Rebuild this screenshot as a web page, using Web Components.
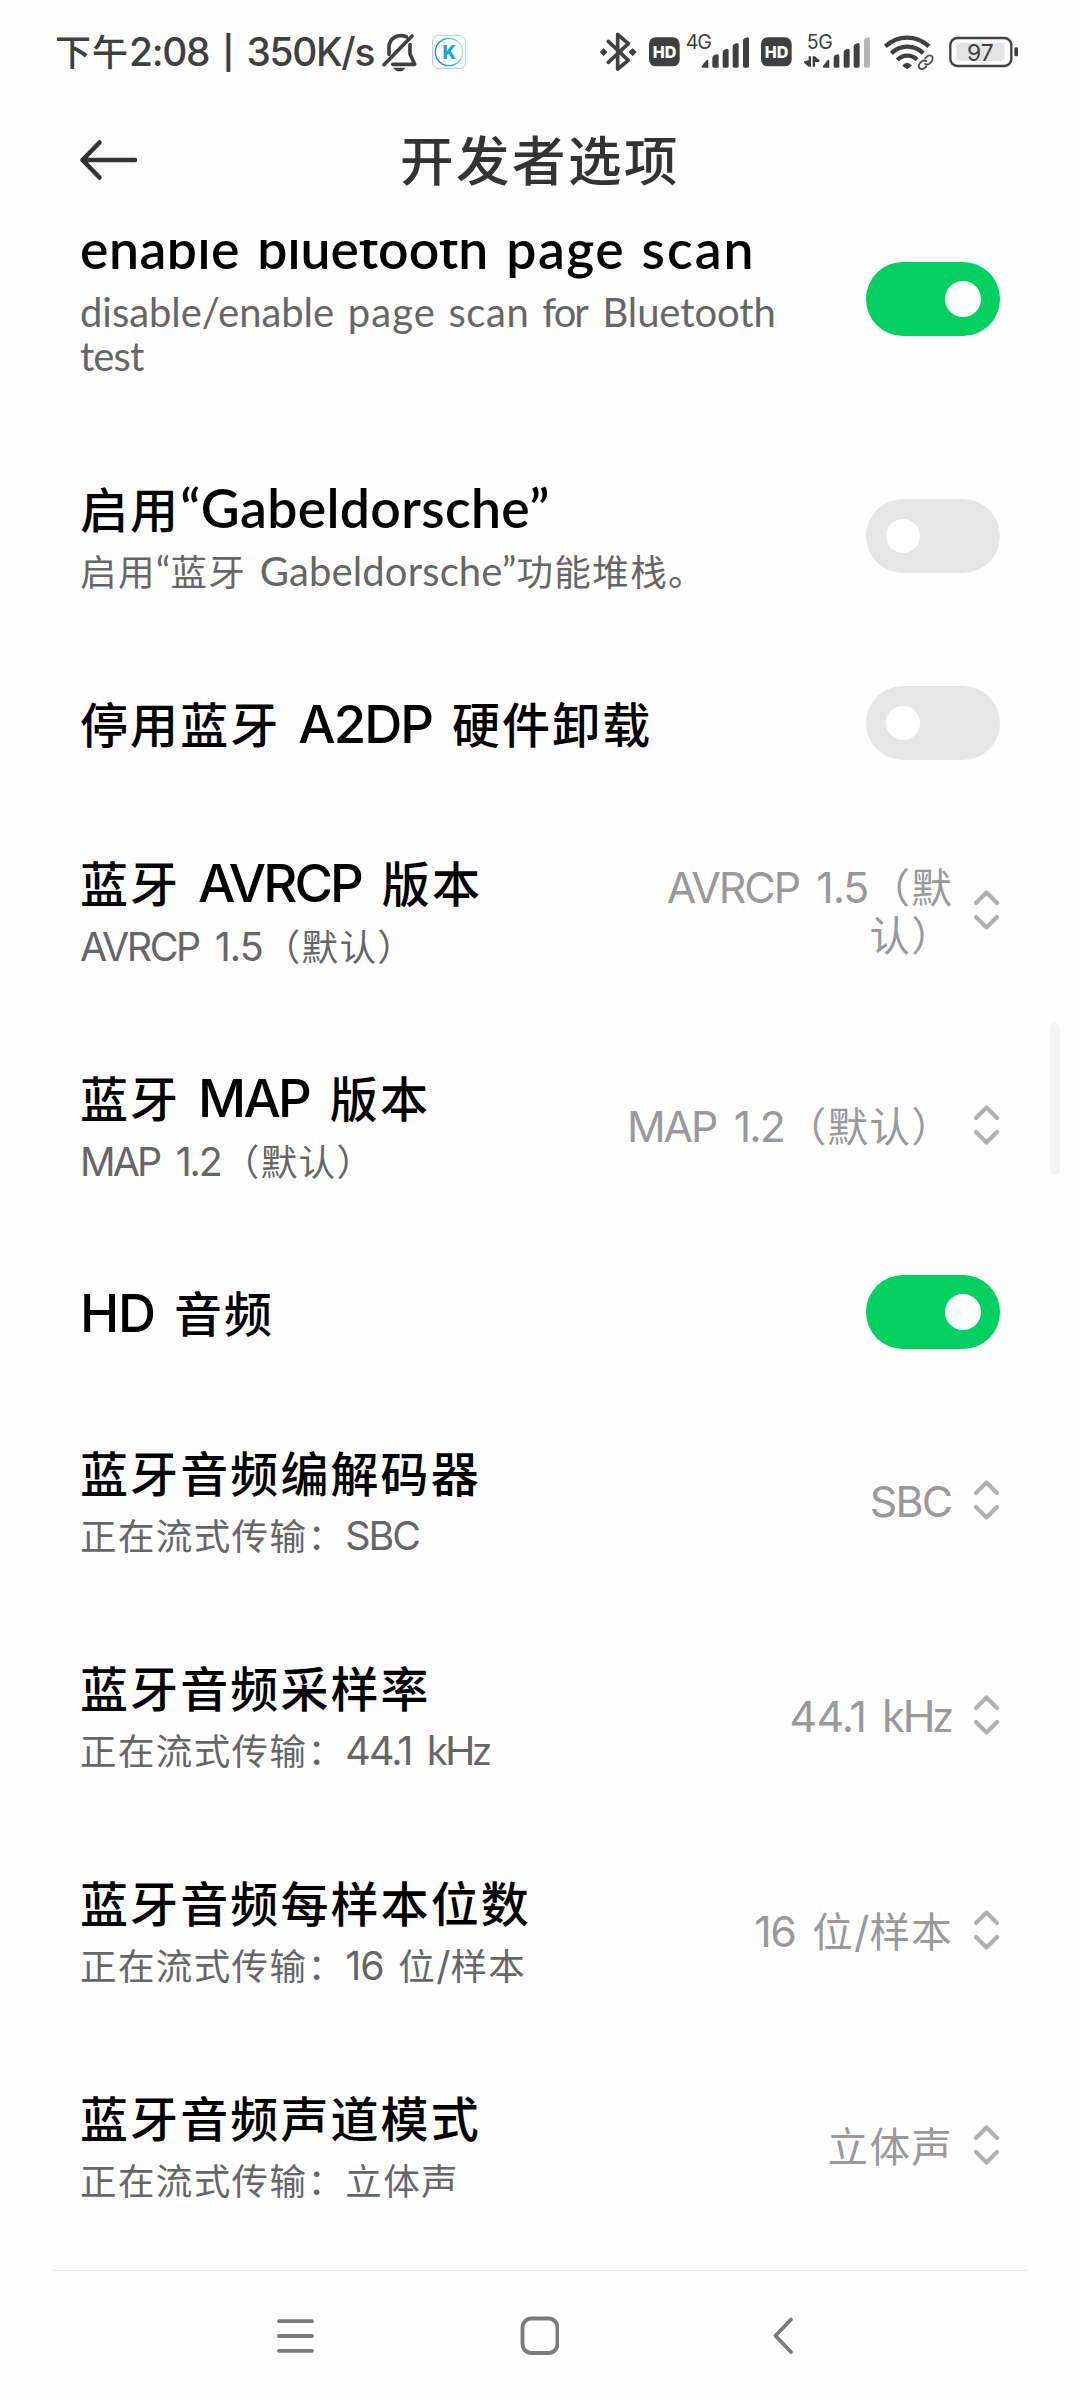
<!DOCTYPE html>
<html lang="zh-CN">
<head>
<meta charset="utf-8">
<title>开发者选项</title>
<style>
  html, body { margin: 0; padding: 0; background: #fefefe; }
  body { font-family: "Noto Sans CJK SC", sans-serif; text-spacing-trim: space-all; text-autospace: no-autospace; }
</style>
</head>
<body>
<settings-screen>
  <status-bar slot="status"></status-bar>
  <title-bar slot="header">开发者选项</title-bar>
  <setting-row control="on">
    <span slot="title"><latin-run w="157">enable</latin-run> <latin-run w="225">bluetooth</latin-run> <latin-run w="113">page</latin-run> <latin-run w="108">scan</latin-run></span>
    <span slot="summary"><latin-run w="252">disable/enable</latin-run> <latin-run w="84">page</latin-run> <latin-run w="77">scan</latin-run> <latin-run w="47">for</latin-run> <latin-run w="168">Bluetooth</latin-run><br><latin-run w="64">test</latin-run></span>
  </setting-row>
  <setting-row control="off">
    <span slot="title">启用<latin-run w="366">“Gabeldorsche”</latin-run></span>
    <span slot="summary">启用<latin-run w="10">“</latin-run>蓝牙 <latin-run w="254">Gabeldorsche”</latin-run>功能堆栈。</span>
  </setting-row>
  <setting-row control="off">
    <span slot="title">停用蓝牙 <latin-run w="133">A2DP</latin-run> 硬件卸载</span>
  </setting-row>
  <setting-row control="select">
    <span slot="title">蓝牙 <latin-run w="163">AVRCP</latin-run> 版本</span>
    <span slot="summary"><latin-run w="119">AVRCP</latin-run> <latin-run w="46">1.5</latin-run>（默认）</span>
    <span slot="value"><latin-run w="132">AVRCP</latin-run> <latin-run w="49">1.5</latin-run>（默<br>认）</span>
  </setting-row>
  <setting-row control="select">
    <span slot="title">蓝牙 <latin-run w="108">MAP</latin-run> 版本</span>
    <span slot="summary"><latin-run w="78">MAP</latin-run> <latin-run w="44">1.2</latin-run>（默认）</span>
    <span slot="value"><latin-run w="87">MAP</latin-run> <latin-run w="48">1.2</latin-run>（默认）</span>
  </setting-row>
  <setting-row control="on">
    <span slot="title"><latin-run w="70">HD</latin-run> 音频</span>
  </setting-row>
  <setting-row control="select">
    <span slot="title">蓝牙音频编解码器</span>
    <span slot="summary">正在流式传输：<latin-run w="72">SBC</latin-run></span>
    <span slot="value"><latin-run w="79">SBC</latin-run></span>
  </setting-row>
  <setting-row control="select">
    <span slot="title">蓝牙音频采样率</span>
    <span slot="summary">正在流式传输：<latin-run w="63">44.1</latin-run> <latin-run w="61">kHz</latin-run></span>
    <span slot="value"><latin-run w="72">44.1</latin-run> <latin-run w="67">kHz</latin-run></span>
  </setting-row>
  <setting-row control="select">
    <span slot="title">蓝牙音频每样本位数</span>
    <span slot="summary">正在流式传输：<latin-run w="37">16</latin-run> 位<latin-run w="12">/</latin-run>样本</span>
    <span slot="value"><latin-run w="39">16</latin-run> 位<latin-run w="13">/</latin-run>样本</span>
  </setting-row>
  <setting-row control="select">
    <span slot="title">蓝牙音频声道模式</span>
    <span slot="summary">正在流式传输：立体声</span>
    <span slot="value">立体声</span>
  </setting-row>
  <nav-bar slot="nav"></nav-bar>
</settings-screen>

<script>
function define(name, html, extra) {
  const tpl = document.createElement('template');
  tpl.innerHTML = html.trim();
  customElements.define(name, class extends HTMLElement {
    constructor() {
      super();
      this.attachShadow({ mode: 'open' }).appendChild(tpl.content.cloneNode(true));
    }
    connectedCallback() { if (extra) extra(this, this.shadowRoot); }
  });
}

define('settings-screen', `
<style>
  :host { display: flex; flex-direction: column; position: relative; width: 1080px; height: 2400px; overflow: hidden; background: #fefefe; }
  .list { height: 2030px; overflow: hidden; }
  .rows { display: flex; flex-direction: column; margin-top: -71px; }
  .thumb { position: absolute; left: 1050px; top: 1023px; width: 10px; height: 152px; border-radius: 5px; background: #f3f3f3; }
</style>
<slot name="status"></slot>
<slot name="header"></slot>
<div class="list"><div class="rows"><slot></slot></div></div>
<slot name="nav"></slot>
<div class="thumb"></div>`);

define('title-bar', `
<style>
  :host { display: grid; grid-template-columns: 200px 1fr 200px; align-items: center; height: 120px; padding-bottom: 20px; color: #333; }
  svg { display: block; margin-left: 76px; }
  h1 { margin: -4px 0 0; text-align: center; font-size: 53.5px; font-weight: 500; letter-spacing: 2.5px; line-height: 80px; }
</style>
<svg width="66" height="48" viewBox="0 0 66 48" fill="none" stroke="#333" stroke-width="4.6" stroke-linecap="round" stroke-linejoin="round"><path d="M59 24H6.500M23.500 6.500L6.500 24L23.500 41.500"/></svg>
<h1><slot></slot></h1>`);

define('setting-row', `
<style>
  :host { display: flex; align-items: center; justify-content: space-between; padding: 0 80px; }
  .text { padding: 48.5px 0 51px; }
  .title { font-size: 48px; line-height: 60px; font-weight: 500; letter-spacing: 2.1px; color: #000; --latin-size: 53.5px; word-spacing: 5px; white-space: nowrap; }
  .summary { margin: 12.5px 0 -1px; font-size: 36.5px; line-height: 44px; letter-spacing: 1.4px; color: #666; --latin-size: 40px; word-spacing: 4px; white-space: nowrap; }
  .value { font-size: 40.5px; line-height: 48px; letter-spacing: 1.3px; color: #999; --latin-size: 43.5px; word-spacing: 5px; text-align: right; white-space: nowrap; }
  .side { display: flex; align-items: center; gap: 20px; }
  [hidden] { display: none; }
</style>
<div class="text">
  <div class="title"><slot name="title"></slot></div>
  <div class="summary"><slot name="summary"></slot></div>
</div>
<div class="side">
  <div class="value"><slot name="value"></slot></div>
  <svg class="chev" width="27" height="42" viewBox="0 0 27 42" fill="none" stroke="#b1b1b1" stroke-width="4.2" stroke-linecap="round" stroke-linejoin="round"><path d="M3 14L13.500 3.500L24 14M3 28L13.500 38.500L24 28"/></svg>
  <toggle-switch></toggle-switch>
</div>`, (el, root) => {
  const kind = el.getAttribute('control');
  if (!el.querySelector('[slot=summary]')) root.querySelector('.summary').hidden = true;
  if (kind === 'select') {
    root.querySelector('toggle-switch').remove();
  } else {
    root.querySelector('.value').remove();
    root.querySelector('.chev').remove();
    root.querySelector('toggle-switch').setAttribute('state', kind);
  }
});

define('toggle-switch', `
<style>
  :host { display: flex; align-items: center; box-sizing: border-box; width: 134px; height: 74px; border-radius: 37px; background: #e6e6e6; padding: 0 20px; }
  :host([state="on"]) { background: #02d060; justify-content: flex-end; padding: 0 19px; }
  i { width: 34px; height: 34px; border-radius: 50%; background: #fff; }
  :host([state="on"]) i { width: 36px; height: 36px; }
</style><i></i>`);

define('nav-bar', `
<style>
  :host { display: block; height: 130px; }
  hr { border: 0; height: 1px; margin: 0 52px; background: #e4e4e4; }
  div { display: flex; justify-content: space-between; align-items: center; padding: 0 280px 0 275px; height: 129px; }
  svg { display: block; fill: none; stroke: #7a7a7a; stroke-width: 3.8; stroke-linecap: round; stroke-linejoin: round; }
</style>
<hr>
<div>
  <svg width="42" height="42" viewBox="0 0 42 42"><path d="M4 6.200H37M4 21H37M4 35.800H37"/></svg>
  <svg width="42" height="42" viewBox="0 0 42 42"><rect x="5.500" y="3.500" width="35" height="34.500" rx="9"/></svg>
  <svg width="42" height="42" viewBox="0 0 42 42"><path d="M33 4.500L17.500 20.700L33 37"/></svg>
</div>`);

define('status-bar', `
<style>
  :host { display: flex; justify-content: space-between; height: 100px; color: #404040; }
  .left { display: flex; padding-left: 55px; }
  .clock { font-size: 36px; line-height: 100px; font-weight: 500; letter-spacing: 1px; --latin-size: 39.5px; word-spacing: 3px; white-space: nowrap; width: 321px; }
  .bar { --latin-size: 33px; font-weight: 600; position: relative; top: -2px; }
  .right { display: flex; padding-right: 53px; }
  svg { display: block; margin-top: 10px; fill: #404040; }
  text { font-family: Inter, sans-serif; }
</style>
<div class="left">
  <div class="clock">下午<latin-run w="78">2:08</latin-run> <latin-run class="bar" w="4">|</latin-run> <latin-run w="126">350K/s</latin-run></div>
  <svg width="48" height="90" viewBox="1008 0 144 270"><g fill="none" stroke="#404040" stroke-width="11" stroke-linecap="round" stroke-linejoin="round"><path d="M1047 133V112C1047 84 1074 71 1099 80M1110 104V132L1124 163H1058M1116 78L1032 164"/></g><path d="M1060 173H1096Q1090 184 1078 184Q1066 184 1060 173Z"/></svg>
  <svg width="46" height="90" viewBox="1152 0 138 270"><defs><linearGradient id="k" x1="0" y1=".6" x2="1" y2=".4"><stop offset="0" stop-color="#2380d8"/><stop offset=".5" stop-color="#22b0ea"/><stop offset="1" stop-color="#a7ecd2"/></linearGradient></defs><path d="M1190 77H1265L1277 89V164L1265 175H1190L1178 164V89Z" fill="#fdfeff" stroke="#b3c9d4" stroke-width="3"/><circle cx="1227" cy="126" r="41" fill="none" stroke="url(#k)" stroke-width="4"/><text x="1228" y="146" font-size="55" font-weight="800" text-anchor="middle" fill="#179ff0">K</text></svg>
</div>
<div class="right">
  <svg width="45" height="90" viewBox="50 0 135 270"><path d="M84 94L144 151L112 177V73L144 101L84 157" fill="none" stroke="#404040" stroke-width="11" stroke-linejoin="round" stroke-linecap="round"/><path d="M70 116L80 126L70 137L60 126ZM157 116L168 126L157 137L146 126Z" stroke="#404040" stroke-width="3" stroke-linejoin="round"/></svg>
  <svg width="42" height="90" viewBox="185 0 126 270"><rect x="206" y="82" width="92" height="87" rx="20"/><text x="217" y="144" font-size="49" font-weight="800" fill="#fff" textLength="71" lengthAdjust="spacingAndGlyphs">HD</text></svg>
  <svg width="70" height="90" viewBox="311 0 210 270"><text x="316" y="116" font-size="59" textLength="79">4G</text><path d="M364 168L379 150Q384 148 384 153V173H368Q363 173 364 168ZM396 143Q396 138 402 135L410 133Q415 133 415 138V170Q415 173 411 173H400Q396 173 396 169ZM427 126Q427 121 432 119L440 116Q445 116 445 121V169Q445 173 441 173H431Q427 173 427 169ZM457 109Q457 104 462 102L470 99Q475 99 475 104V169Q475 173 471 173H461Q457 173 457 169ZM488 92Q488 87 493 85L501 82Q506 82 506 87V169Q506 173 502 173H492Q488 173 488 169Z"/></svg>
  <svg width="43" height="90" viewBox="521 0 129 270"><rect x="542" y="82" width="92" height="87" rx="20"/><text x="553" y="144" font-size="49" font-weight="800" fill="#fff" textLength="71" lengthAdjust="spacingAndGlyphs">HD</text></svg>
  <svg width="80" height="90" viewBox="650 0 240 270"><text x="679" y="116" font-size="59" textLength="79">5G</text><path d="M671 154L685 151V139H692V170H685L671 158ZM697 139H704L717 151V156H704V170H697Z"/><path d="M728 168L742 150Q747 148 747 153V173H731Q726 173 728 168ZM760 143Q760 138 765 135L772 133Q777 133 777 138V170Q777 173 773 173H764Q760 173 760 169ZM790 126Q790 121 795 119L803 116Q808 116 808 121V169Q808 173 804 173H794Q790 173 790 169ZM820 109Q820 104 825 102L833 99Q838 99 838 104V169Q838 173 834 173H824Q820 173 820 169Z"/><path fill="#b5b5b5" d="M851 92Q851 87 856 85L864 82Q869 82 869 87V169Q869 173 865 173H855Q851 173 851 169Z"/></svg>
  <svg width="63" height="90" viewBox="890 0 189 270"><g fill="none" stroke="#404040" stroke-width="13" stroke-linecap="butt"><path d="M915 109Q944 83 980 83Q1017 83 1046 109M933 130Q954 110 980 110Q1009 110 1029 130M951 150Q964 137 980 137Q998 137 1010 149"/></g><path d="M966 167Q970 159 980 158Q991 159 995 167L980 178Z"/><g fill="none" stroke="#505050" stroke-width="5.500"><path d="M1033 146L1041 139Q1050 133 1056 140Q1059 148 1054 155L1046 162Q1038 166 1033 160M1039 168L1033 174Q1024 180 1017 174Q1013 167 1018 160L1026 153Q1034 149 1040 155"/></g></svg>
  <svg width="87" height="90" viewBox="1079 0 261 270"><rect x="1110" y="84" width="183" height="84" rx="21" fill="none" stroke="#404040" stroke-width="7"/><rect x="1128" y="98" width="144" height="55" rx="8" fill="#e4e4e4"/><rect x="1302" y="112" width="11" height="27" rx="4"/><text x="1160" y="152" font-size="70" font-weight="400" textLength="80" lengthAdjust="spacingAndGlyphs">97</text></svg>
</div>`);

/* Latin text uses its own faces at a larger size, spaced out to the given ink width:
   Inter for capitals and digits, Lato for words in lower case.
   Registered last, so that the surrounding elements' styles apply when it measures. */
define('latin-run', `
<style>
  :host { font-family: Lato, "Noto Sans CJK SC", sans-serif; font-size: var(--latin-size); line-height: 0; letter-spacing: 0; word-spacing: 0; }
  :host([caps]) { font-family: Inter, "Noto Sans CJK SC", sans-serif; font-size: calc(var(--latin-size) * .985); }
</style><slot></slot>`, (el) => {
  const text = el.textContent;
  if (/\d/.test(text) || !/[a-z“”]/.test(text)) el.setAttribute('caps', '');
  else if (el.closest('[slot=title]')) el.style.fontWeight = 600;
  const cs = getComputedStyle(el);
  const ctx = document.createElement('canvas').getContext('2d');
  ctx.font = cs.fontWeight + ' ' + cs.fontSize + ' ' + cs.fontFamily;
  const m = ctx.measureText(text);
  const ink = m.actualBoundingBoxLeft + m.actualBoundingBoxRight;
  if (text.length > 1) {
    const ls = (parseFloat(el.getAttribute('w')) - ink) / (text.length - 1);
    el.style.letterSpacing = ls.toFixed(3) + 'px';
    el.style.marginRight = (-ls).toFixed(3) + 'px';
  }
});
</script>
</body>
</html>
